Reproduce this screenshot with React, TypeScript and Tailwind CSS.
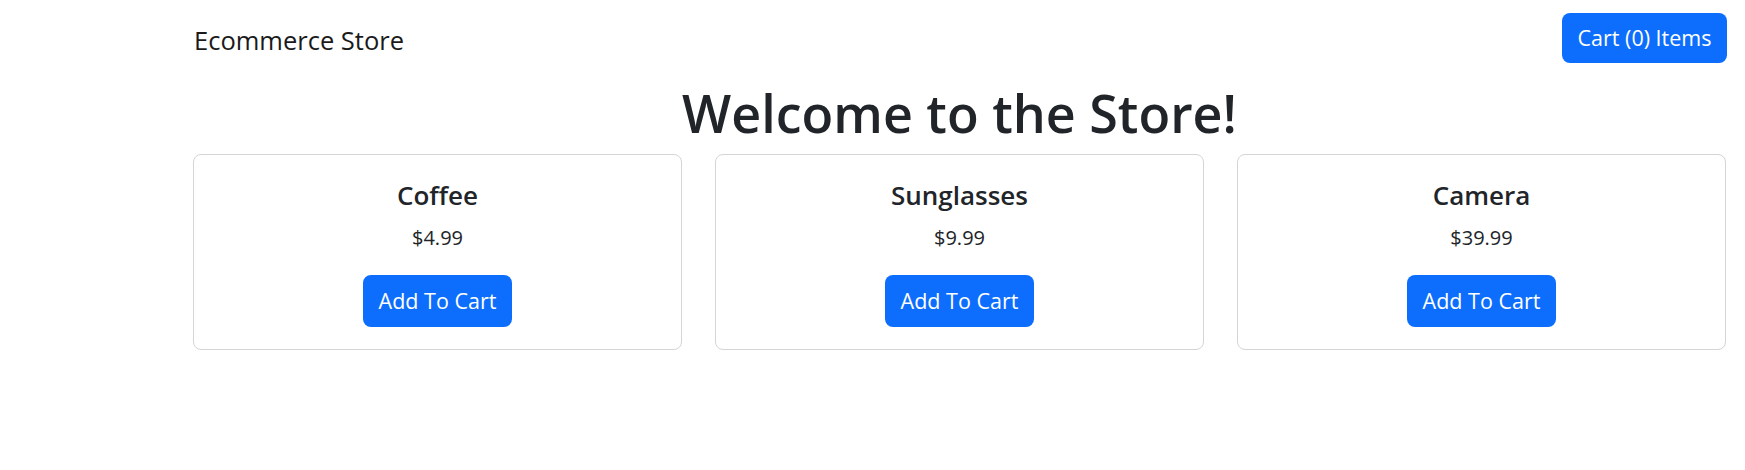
import { useState } from "react";

type Product = {
  id: number;
  name: string;
  price: number;
};

const products: Product[] = [
  { id: 1, name: "Coffee", price: 4.99 },
  { id: 2, name: "Sunglasses", price: 9.99 },
  { id: 3, name: "Camera", price: 39.99 },
];

function ProductCard({ product, onAdd }: { product: Product; onAdd: () => void }) {
  return (
    <div className="flex flex-col items-center border border-[#d5d5d6] rounded-[8px] bg-white pt-[25px] pb-[22px]">
      <h5 className="text-[26px] leading-[30px] font-semibold text-[#212529]">{product.name}</h5>
      <p className="mt-[13px] text-[20px] leading-[30px] text-[#212529]">${product.price.toFixed(2)}</p>
      <button
        onClick={onAdd}
        className="mt-[22px] h-[52px] w-[149px] flex items-center justify-center rounded-[8px] bg-[#0d6efd] text-white text-[21.5px] leading-[30px] cursor-pointer"
      >
        Add To Cart
      </button>
    </div>
  );
}

export default function App() {
  const [cart, setCart] = useState<Product[]>([]);

  return (
    <div className="min-h-screen bg-white font-['Open_Sans',sans-serif] text-[#212529]">
      {/* Navbar */}
      <nav className="flex items-start justify-between pl-[194px] pr-[18px] pt-[13px]">
        <a href="#" className="mt-[12px] text-[25.5px] leading-[30px] text-[#1a1a1a]">
          Ecommerce Store
        </a>
        <button className="h-[50px] w-[165px] flex items-center justify-center rounded-[8px] bg-[#0d6efd] text-white text-[21.5px] leading-[30px] cursor-pointer">
          Cart ({cart.length}) Items
        </button>
      </nav>

      <div className="pl-[193px] pr-[19px]">
        <h1 className="mt-[18px] text-center text-[52px] leading-[63px] font-semibold">
          Welcome to the Store!
        </h1>

        <div className="mt-[10px] grid grid-cols-3 gap-[33px]">
          {products.map((p) => (
            <ProductCard key={p.id} product={p} onAdd={() => setCart([...cart, p])} />
          ))}
        </div>
      </div>
    </div>
  );
}
